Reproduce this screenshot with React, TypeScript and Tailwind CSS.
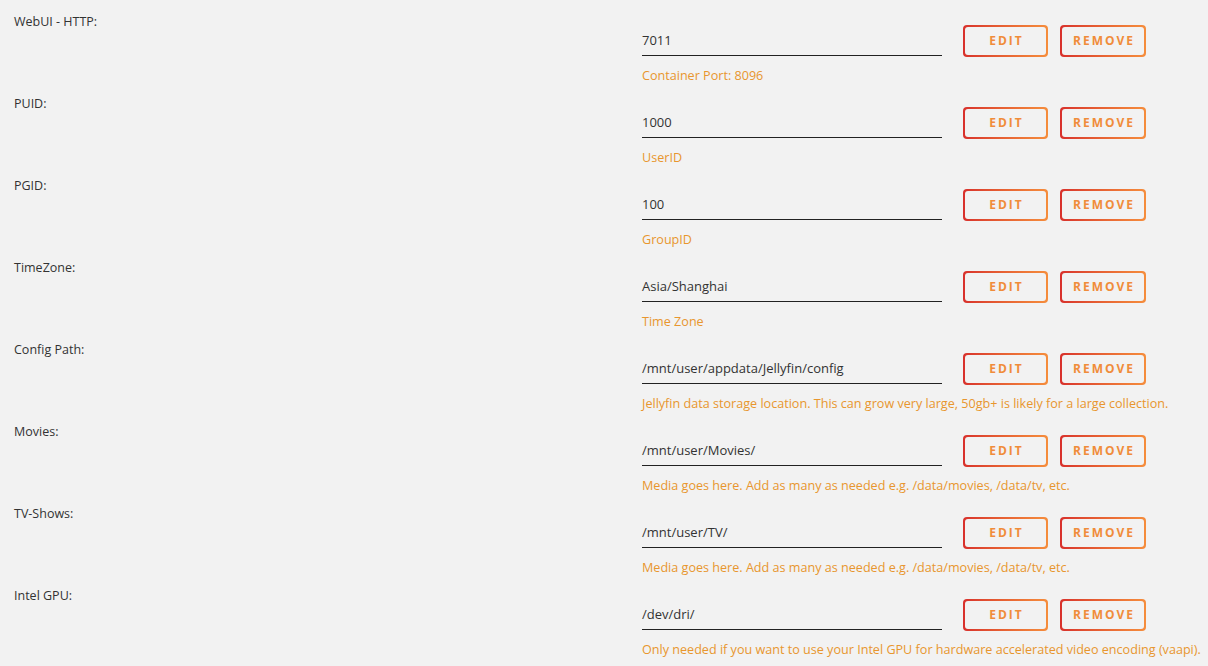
const rows = [
  { label: "WebUI - HTTP:", value: "7011", desc: "Container Port: 8096" },
  { label: "PUID:", value: "1000", desc: "UserID" },
  { label: "PGID:", value: "100", desc: "GroupID" },
  { label: "TimeZone:", value: "Asia/Shanghai", desc: "Time Zone" },
  {
    label: "Config Path:",
    value: "/mnt/user/appdata/Jellyfin/config",
    desc: "Jellyfin data storage location. This can grow very large, 50gb+ is likely for a large collection.",
  },
  {
    label: "Movies:",
    value: "/mnt/user/Movies/",
    desc: "Media goes here. Add as many as needed e.g. /data/movies, /data/tv, etc.",
  },
  {
    label: "TV-Shows:",
    value: "/mnt/user/TV/",
    desc: "Media goes here. Add as many as needed e.g. /data/movies, /data/tv, etc.",
  },
  {
    label: "Intel GPU:",
    value: "/dev/dri/",
    desc: "Only needed if you want to use your Intel GPU for hardware accelerated video encoding (vaapi).",
  },
];

function GradButton({ text, width }: { text: string; width: string }) {
  return (
    <div className={`${width} h-[32px] rounded-[4px] p-[2px] bg-gradient-to-r from-[#d8302c] to-[#f58d3c]`}>
      <div className="w-full h-full rounded-[3px] bg-[#f2f2f2] flex items-center justify-center">
        <span className="text-[12px] font-bold tracking-[2px] text-[#f08c3a] pl-[2px]">{text}</span>
      </div>
    </div>
  );
}

export default function App() {
  return (
    <div
      className="w-[1208px] h-[666px] overflow-hidden bg-[#f2f2f2] text-[#333]"
      style={{ fontFamily: '"Open Sans", "DejaVu Sans", sans-serif' }}
    >
      {rows.map((r) => (
        <div key={r.label} className="flex h-[82px]">
          {/* Label */}
          <div className="w-[642px] shrink-0 pl-[14px] pt-[13px] text-[12.5px] leading-[18px]">{r.label}</div>

          {/* Field */}
          <div className="flex flex-col pt-[25px]">
            <div className="flex items-start">
              <div className="w-[300px] h-[31px] border-b border-[#222] flex items-center pt-[1px] text-[13px] text-[#333]">
                {r.value}
              </div>
              <div className="ml-[21px]">
                <GradButton text="EDIT" width="w-[85px]" />
              </div>
              <div className="ml-[12px]">
                <GradButton text="REMOVE" width="w-[86px]" />
              </div>
            </div>
            <div className="mt-[10px] text-[12.6px] leading-[18px] text-[#e8962e] whitespace-nowrap">{r.desc}</div>
          </div>
        </div>
      ))}
    </div>
  );
}
